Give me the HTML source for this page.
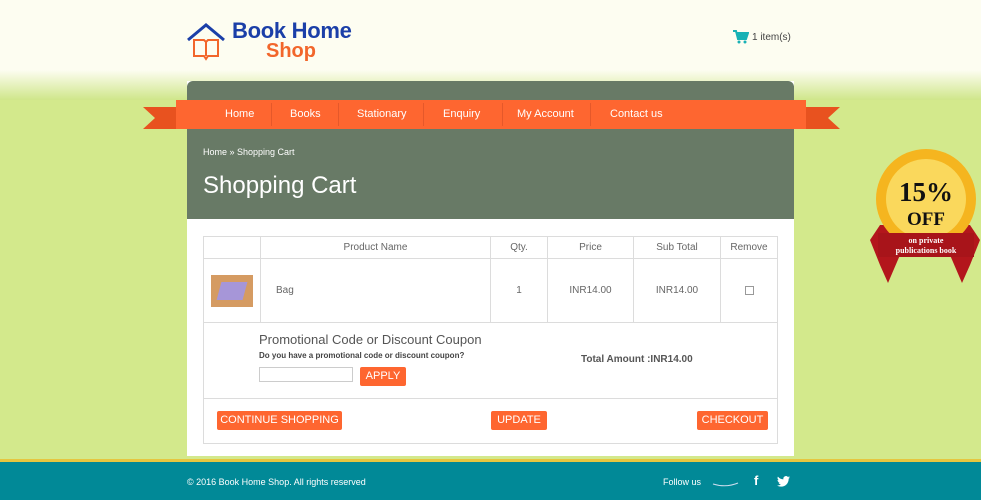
<!DOCTYPE html>
<html><head><meta charset="utf-8"><style>
*{margin:0;padding:0;box-sizing:border-box}
body{width:981px;height:500px;overflow:hidden;position:relative;font-family:"Liberation Sans",sans-serif;background:#d3e98c}
.top{position:absolute;left:0;top:0;width:981px;height:88px;background:#fdfdf1}
.grass{position:absolute;left:0;top:70px;width:981px;height:30px;background:linear-gradient(#fdfdf1,#cfe68a)}
.main{position:absolute;left:187px;top:81px;width:607px;height:375px;background:#fff}
.head{position:absolute;left:187px;top:81px;width:607px;height:138px;background:#687a66;border-radius:6px 6px 0 0}
.nav{position:absolute;left:176px;top:100px;width:630px;height:29px;background:#fe6630;color:#fff;font-size:11px}
.nav span{position:absolute;top:8px}
.nav i{position:absolute;top:3px;width:1px;height:23px;background:#e5582a}
.rib{position:absolute;top:107px;width:40px;height:22px;background:#e8521f}
.bc{position:absolute;left:203px;top:147px;color:#fff;font-size:9px}
h1{position:absolute;left:203px;top:172px;color:#fff;font-weight:normal;font-size:24px}
table{position:absolute;left:203px;top:236px;width:575px;border-collapse:collapse;font-size:10px;color:#666}
td{border:1px solid #dcdcdc;text-align:center}
.btn{position:absolute;background:#fe6630;color:#fff;font-size:11px;height:19px;line-height:19px;text-align:center;border-radius:2px}
.foot{position:absolute;left:0;top:459px;width:981px;height:41px;background:#018997;border-top:3px solid #e6c640;color:#fff;font-size:9px}
</style></head><body>
<div class="top"></div><div class="grass"></div>
<div class="main"></div>
<div class="head"></div>
<svg style="position:absolute;left:186px;top:22px" width="44" height="40"><path d="M2 18 L20 3 L38 18" stroke="#1b3fa8" stroke-width="3" fill="none"/><path d="M8 18 v16 h10 l2 3 l2-3 h10 v-16 h-10 l-2 2 l-2-2z M20 20 v14" stroke="#f2662b" stroke-width="2" fill="none"/></svg>
<div style="position:absolute;left:232px;top:18px;color:#1b3fa8;font-size:22px;font-weight:bold;letter-spacing:-0.3px">Book Home</div>
<div style="position:absolute;left:266px;top:40px;color:#f2662b;font-size:20px;font-weight:bold">Shop</div>
<svg style="position:absolute;left:733px;top:30px" width="16" height="14"><path d="M0 1h3l2 8h8l2-6H4" stroke="#18b1b5" stroke-width="2" fill="#18b1b5"/><circle cx="6" cy="12" r="1.5" fill="#18b1b5"/><circle cx="12" cy="12" r="1.5" fill="#18b1b5"/></svg>
<div style="position:absolute;left:752px;top:32px;color:#444;font-size:10px">1 item(s)</div>
<div class="rib" style="left:143px;clip-path:polygon(0 0,100% 0,100% 100%,0 100%,30% 50%)"></div>
<div class="rib" style="left:800px;clip-path:polygon(0 0,100% 0,70% 50%,100% 100%,0 100%)"></div>
<div class="nav"><span style="left:49px">Home</span><i style="left:95px"></i><span style="left:114px">Books</span><i style="left:162px"></i><span style="left:181px">Stationary</span><i style="left:247px"></i><span style="left:267px">Enquiry</span><i style="left:326px"></i><span style="left:341px">My Account</span><i style="left:414px"></i><span style="left:434px">Contact us</span></div>
<div class="bc">Home » Shopping Cart</div>
<h1>Shopping Cart</h1>
<table>
<tr style="height:22px"><td style="width:57px"></td><td style="width:230px">Product Name</td><td style="width:57px">Qty.</td><td style="width:86px">Price</td><td style="width:87px">Sub Total</td><td>Remove</td></tr>
<tr style="height:64px"><td><div style="width:42px;height:32px;margin:auto;background:#d59b62;position:relative"><div style="position:absolute;left:8px;top:7px;width:26px;height:18px;background:#a696d8;transform:skew(-15deg)"></div></div></td><td style="text-align:left;padding-left:15px">Bag</td><td>1</td><td>INR14.00</td><td>INR14.00</td><td><div style="width:9px;height:9px;border:1px solid #999;margin:auto"></div></td></tr>
<tr style="height:76px"><td colspan="6" style="border-bottom:1px solid #dcdcdc"></td></tr>
<tr style="height:45px"><td colspan="6"></td></tr>
</table>
<div style="position:absolute;left:259px;top:332px;font-size:13px;color:#555">Promotional Code or Discount Coupon</div>
<div style="position:absolute;left:259px;top:351px;font-size:8px;color:#444;font-weight:bold">Do you have a promotional code or discount coupon?</div>
<div style="position:absolute;left:259px;top:367px;width:94px;height:15px;border:1px solid #ccc"></div>
<div class="btn" style="left:360px;top:367px;width:46px">APPLY</div>
<div style="position:absolute;left:581px;top:354px;font-size:10px;color:#555;font-weight:bold">Total Amount :INR14.00</div>
<div class="btn" style="left:217px;top:411px;width:125px">CONTINUE SHOPPING</div>
<div class="btn" style="left:491px;top:411px;width:56px">UPDATE</div>
<div class="btn" style="left:697px;top:411px;width:71px">CHECKOUT</div>
<svg style="position:absolute;left:870px;top:145px" width="111" height="145"><polygon points="10,80 100,80 110,95 100,120 92,138 80,110 30,110 18,138 10,120 0,95" fill="#b3161c"/><circle cx="56" cy="54" r="50" fill="#f5b51f"/><circle cx="56" cy="54" r="40" fill="#fad85c"/><rect x="8" y="88" width="96" height="24" fill="#a8141a"/><text x="56" y="56" text-anchor="middle" font-family="Liberation Serif" font-weight="bold" font-size="27" fill="#111">15%</text><text x="56" y="80" text-anchor="middle" font-family="Liberation Serif" font-weight="bold" font-size="19" fill="#111">OFF</text><text x="56" y="98" text-anchor="middle" font-family="Liberation Serif" font-weight="bold" font-size="8" fill="#fff">on private</text><text x="56" y="108" text-anchor="middle" font-family="Liberation Serif" font-weight="bold" font-size="8" fill="#fff">publications book</text></svg>
<div class="foot"><div style="position:absolute;left:187px;top:15px">© 2016 Book Home Shop. All rights reserved</div><div style="position:absolute;left:663px;top:15px">Follow us</div>
<svg style="position:absolute;left:712px;top:18px" width="28" height="8"><path d="M1 4 Q14 8 26 3" stroke="#cde" stroke-width="1" fill="none"/></svg>
<div style="position:absolute;left:754px;top:11px;font-size:13px;font-weight:bold">f</div>
<svg style="position:absolute;left:777px;top:14px" width="13" height="11" viewBox="0 0 24 20"><path d="M24 2.4a10 10 0 0 1-2.8.8A5 5 0 0 0 23.3.4a10 10 0 0 1-3.1 1.2A4.9 4.9 0 0 0 11.8 6 14 14 0 0 1 1.7.9a4.9 4.9 0 0 0 1.5 6.6 4.9 4.9 0 0 1-2.2-.6 4.9 4.9 0 0 0 3.9 4.9 4.9 4.9 0 0 1-2.2.1 4.9 4.9 0 0 0 4.6 3.4A9.9 9.9 0 0 1 0 17.3 14 14 0 0 0 7.5 19.5c9 0 14-7.5 14-14v-.6A10 10 0 0 0 24 2.4z" fill="#fff"/></svg></div>
</body></html>
